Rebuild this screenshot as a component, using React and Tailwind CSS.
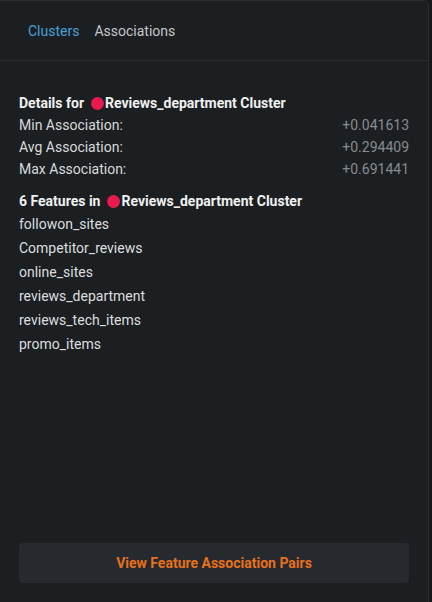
export default function App() {
  const features = [
    "followon_sites",
    "Competitor_reviews",
    "online_sites",
    "reviews_department",
    "reviews_tech_items",
    "promo_items",
  ];
  const stats = [
    ["Min Association:", "+0.041613"],
    ["Avg Association:", "+0.294409"],
    ["Max Association:", "+0.691441"],
  ];

  return (
    <div
      className="w-[432px] h-[602px] bg-[#16191b] overflow-hidden"
      style={{ fontFamily: "Roboto, 'Noto Sans', sans-serif" }}
    >
      <div className="w-[429px] h-[602px] bg-[#1b1f22] border-t border-r border-[#2a2e32] rounded-tr-md flex flex-col">
        {/* Tabs */}
        <div className="h-[60px] flex items-center gap-[15px] px-[28px] pt-[2px] border-b border-[#2c3034] text-[14px]">
          <span className="text-[#4a9fd9]">Clusters</span>
          <span className="text-[#c4c6c8]">Associations</span>
        </div>

        <div className="flex-1 flex flex-col px-[19px] pt-[32px] pb-[19px]">
          {/* Details */}
          <div className="flex items-center text-[14px] font-bold text-[#f0f0f0] h-[20px]">
            <span>Details for</span>
            <span className="w-[13px] h-[13px] rounded-full bg-[#e8194b] ml-[7px] mr-[1px]" />
            <span>Reviews_department Cluster</span>
          </div>
          <div className="flex flex-col mt-[1px]">
            {stats.map(([label, value]) => (
              <div key={label} className="flex justify-between items-center h-[22px] text-[14px]">
                <span className="text-[#d8dadb]">{label}</span>
                <span className="text-[#878b8f]">{value}</span>
              </div>
            ))}
          </div>

          {/* Features */}
          <div className="flex items-center text-[14px] font-bold text-[#f0f0f0] h-[20px] mt-[11px]">
            <span>6 Features in</span>
            <span className="w-[13px] h-[13px] rounded-full bg-[#e8194b] ml-[7px] mr-[1px]" />
            <span>Reviews_department Cluster</span>
          </div>
          <div className="flex flex-col mt-[1px]">
            {features.map((f) => (
              <div key={f} className="h-[24px] flex items-center text-[14px] text-[#dcdedf]">
                {f}
              </div>
            ))}
          </div>

          <div className="flex-1" />

          <button className="h-[40px] w-full rounded-[3px] bg-[#262a2e] text-[14px] font-bold text-[#e8701c]">
            View Feature Association Pairs
          </button>
        </div>
      </div>
    </div>
  );
}
